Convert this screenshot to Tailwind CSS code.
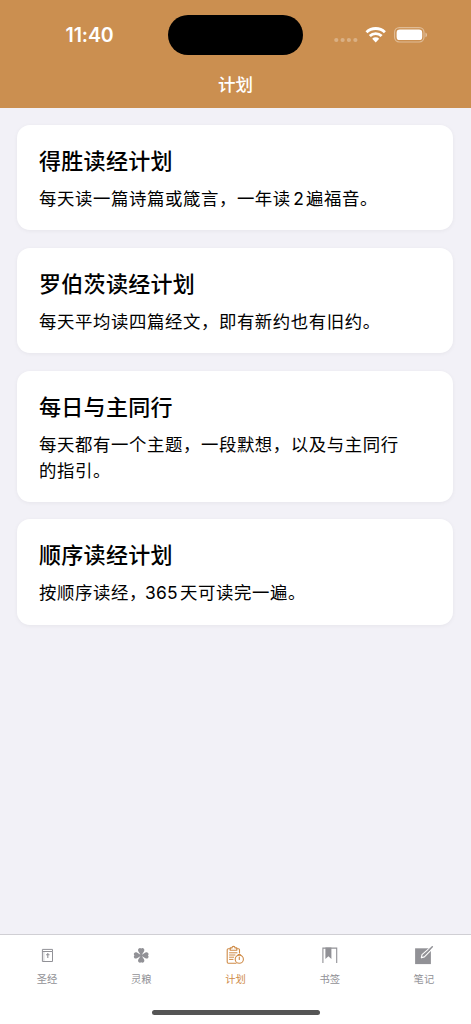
<!DOCTYPE html>
<html lang="zh-CN">
<head>
<meta charset="utf-8">
<title>计划</title>
<script src="https://cdn.jsdelivr.net/npm/@tailwindcss/browser@4"></script>
</head>
<body class="bg-[#f2f1f7] font-['Inter','Noto_Sans_CJK_SC',sans-serif] text-black">
<div class="flex h-[1024px] w-[471px] flex-col overflow-hidden">
  <header class="flex h-[108px] shrink-0 flex-col bg-[#cb8f50] text-white">
    <div class="flex h-[55px] shrink-0 items-start pt-[15px]">
      <div class="w-[168px] pl-[65.5px] pt-[6px] text-[19.5px] leading-7 font-semibold tracking-[-0.1px]">11:40</div>
      <div class="h-[39.5px] w-[135px] rounded-full bg-black"></div>
      <svg class="ml-[31px] mt-[10px]" width="94" height="20" viewBox="0 0 94 20" fill="none">
        <g fill="#fff" fill-opacity=".3"><circle cx="2.3" cy="15" r="2.1"/><circle cx="8.6" cy="15" r="2.1"/><circle cx="14.9" cy="15" r="2.1"/><circle cx="21.4" cy="15" r="2.1"/></g>
        <g stroke="#fff" stroke-width="2.9">
          <path d="M32.5 7.2a13.4 13.4 0 0 1 18.4 0"/>
          <path d="M35.8 11a8.5 8.5 0 0 1 11.8 0"/>
        </g>
        <path d="M38.2 13.8a4.9 4.9 0 0 1 7 0L41.7 17.4Z" fill="#fff"/>
        <rect x="60.6" y="2.6" width="29.4" height="14.4" rx="4.7" stroke="#fff" stroke-opacity=".4" stroke-width="1.2"/>
        <rect x="62.6" y="4.6" width="25.6" height="10.5" rx="3.2" fill="#fff"/>
        <path d="M91.5 7.5c1.9.7 1.9 4.1 0 4.8z" fill="#fff" fill-opacity=".5"/>
      </svg>
    </div>
    <h1 class="pt-[16px] text-center text-[17.5px] leading-7 font-medium">计划</h1>
  </header>

  <main class="flex flex-1 flex-col gap-[17.4px] pt-[17px] pr-[18px] pl-[17.4px]">
    <section class="rounded-[13px] bg-white px-[21.6px] pt-[22px] pb-[18.4px] shadow-[0_1px_4px_rgba(0,0,0,0.05)]">
      <h2 class="text-[22px] leading-7 font-medium tracking-[0.3px]">得胜读经计划</h2>
      <p class="mt-[11px] text-[17.4px] leading-[26px] tracking-[0.6px]">每天读一篇诗篇或箴言，一年读<span class="mr-[2px] ml-[2.5px] tracking-normal">2</span>遍福音。</p>
    </section>
    <section class="rounded-[13px] bg-white px-[21.6px] pt-[22px] pb-[18.4px] shadow-[0_1px_4px_rgba(0,0,0,0.05)]">
      <h2 class="text-[22px] leading-7 font-medium tracking-[0.3px]">罗伯茨读经计划</h2>
      <p class="mt-[11px] text-[17.4px] leading-[26px] tracking-[0.6px]">每天平均读四篇经文，即有新约也有旧约。</p>
    </section>
    <section class="rounded-[13px] bg-white px-[21.6px] pt-[22px] pb-[18.4px] shadow-[0_1px_4px_rgba(0,0,0,0.05)]">
      <h2 class="text-[22px] leading-7 font-medium tracking-[0.3px]">每日与主同行</h2>
      <p class="mt-[11px] text-[17.4px] leading-[26px] tracking-[0.6px]">每天都有一个主题，一段默想，以及与主同行<br>的指引。</p>
    </section>
    <section class="rounded-[13px] bg-white px-[21.6px] pt-[22px] pb-[18.4px] shadow-[0_1px_4px_rgba(0,0,0,0.05)]">
      <h2 class="text-[22px] leading-7 font-medium tracking-[0.3px]">顺序读经计划</h2>
      <p class="mt-[11px] text-[17.4px] leading-[26px] tracking-[0.6px]">按顺序读经，<span class="mr-[2px] -ml-[2px] tracking-[0.3px]">365</span>天可读完一遍。</p>
    </section>
  </main>

  <footer class="flex h-[90px] shrink-0 flex-col items-center border-t border-[#d0cfd4] bg-white">
    <nav class="grid h-[75px] w-full grid-cols-5 text-[10.3px] leading-4 text-[#919196]">
      <div class="flex flex-col items-center pt-2">
        <svg width="26" height="26" viewBox="0 0 26 26" fill="none" stroke="currentColor">
          <path d="M8.4 6.4V18.5H18.5V8.5H8.4M8.4 6.4H18.5V8.5" stroke-width="1"/><path d="M9.9 8.5V18" stroke-width=".7" opacity=".6"/>
          <path d="M13.8 10v5M12.1 11.7h3.4" stroke-width="1.1"/>
        </svg>
        <span class="mt-[2px]">圣经</span>
      </div>
      <div class="flex flex-col items-center pt-2">
        <svg width="26" height="26" viewBox="0 0 26 26" fill="currentColor">
          <path id="petal" d="M13.2 12.8 10.3 8.2C9.4 6.3 10.7 5 12.1 5L13.2 5.6 14.3 5C15.7 5 17 6.3 16.1 8.2Z"/>
          <use href="#petal" transform="rotate(90 13.2 12.4)"/><use href="#petal" transform="rotate(180 13.2 12.4)"/><use href="#petal" transform="rotate(270 13.2 12.4)"/>
          <circle cx="13.2" cy="12.4" r="1.3"/>
        </svg>
        <span class="mt-[2px]">灵粮</span>
      </div>
      <div class="flex flex-col items-center pt-2 text-[#cf8b47]">
        <svg width="26" height="26" viewBox="0 0 26 26" fill="none" stroke="currentColor" stroke-width="1.1" stroke-linecap="round" stroke-linejoin="round">
          <path d="M8.5 5.7H6.3Q5.2 5.7 5.2 6.8V19Q5.2 20.2 6.3 20.2H14M14.8 5.7H16.5Q17.5 5.7 17.5 6.8V10"/>
          <path d="M8.2 4.9h1.8a1.5 1.5 0 0 1 3 0h1.8v2.4H8.2z"/>
          <path d="M7.5 9.8h7.5M7.5 12h5.5M7.5 14.2h4.2M7.5 16.4h3.5" stroke-width="1"/>
          <circle cx="17.3" cy="16.2" r="4.1"/><path d="M17.3 14v2.5M16.3 11.5h2"/>
        </svg>
        <span class="mt-[2px]">计划</span>
      </div>
      <div class="flex flex-col items-center pt-2">
        <svg width="26" height="26" viewBox="0 0 26 26" fill="none">
          <path d="M5.9 20V5.1H19.7V20" stroke="currentColor" stroke-width="1.1"/>
          <path d="M8.4 4.5h6v11.6l-3-2.8-3 2.8z" fill="currentColor"/>
        </svg>
        <span class="mt-[2px]">书签</span>
      </div>
      <div class="flex flex-col items-center pt-2">
        <svg width="26" height="26" viewBox="0 0 26 26" fill="none" stroke-linejoin="round" stroke-linecap="round">
          <path d="M4.1 5.3H19.9V21.1H4.1z" fill="currentColor"/>
          <path d="m10.4 14.6.6-3 8.6-7.4" stroke="#fff" stroke-width="1.1"/>
          <path d="m10.4 14.6 3-.7 7.9-8" stroke="#fff" stroke-width="1.1"/>
          <path d="m19.6 4.2 1.9 1.9-2 1.8v-4z" fill="#fff"/>
          <path d="m18.3 6.7 3-3" stroke="currentColor" stroke-width="1.5"/>
        </svg>
        <span class="mt-[2px]">笔记</span>
      </div>
    </nav>
    <div class="h-[5px] w-[168px] rounded-full bg-[#555]"></div>
  </footer>
</div>
</body>
</html>
